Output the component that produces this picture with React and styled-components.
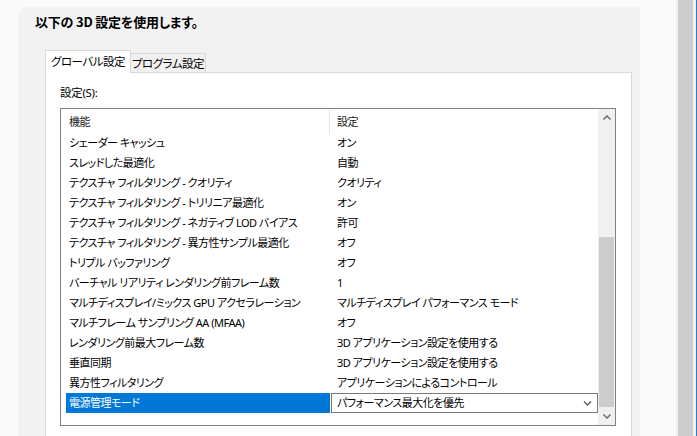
import React from 'react'
import styled, { createGlobalStyle } from 'styled-components'

const GlobalStyle = createGlobalStyle`
    html, body {
        margin: 0;
        padding: 0;
        background: #fafafa;
    }
    body {
        font-family: "Noto Sans", "Noto Sans CJK JP", sans-serif;
        font-feature-settings: "palt";
        color: #000;
        overflow: hidden;
    }
`

const rows = [
    ['シェーダー キャッシュ', 'オン'],
    ['スレッドした最適化', '自動'],
    ['テクスチャ フィルタリング - クオリティ', 'クオリティ'],
    ['テクスチャ フィルタリング - トリリニア最適化', 'オン'],
    ['テクスチャ フィルタリング - ネガティブ LOD バイアス', '許可'],
    ['テクスチャ フィルタリング - 異方性サンプル最適化', 'オフ'],
    ['トリプル バッファリング', 'オフ'],
    ['バーチャル リアリティ レンダリング前フレーム数', '1'],
    ['マルチディスプレイ/ミックス GPU アクセラレーション', 'マルチディスプレイ パフォーマンス モード'],
    ['マルチフレーム サンプリング AA (MFAA)', 'オフ'],
    ['レンダリング前最大フレーム数', '3D アプリケーション設定を使用する'],
    ['垂直同期', '3D アプリケーション設定を使用する'],
    ['異方性フィルタリング', 'アプリケーションによるコントロール'],
]

const Chevron = ({ up, color = '#606060', w = 8, h = 5 }) => (
    <svg width={w} height={h} viewBox="0 0 8 5">
        <polyline
            points={up ? '0.5,4.5 4,1 7.5,4.5' : '0.5,0.5 4,4 7.5,0.5'}
            fill="none"
            stroke={color}
            strokeWidth="1.3"
        />
    </svg>
)

const App = () => {
    return (
        <Window>
            <GlobalStyle />
            <Main>
                <Panel>
                    <Title>以下の 3D 設定を使用します。</Title>
                    <Tabs>
                        <Tab $active>グローバル設定</Tab>
                        <Tab>プログラム設定</Tab>
                    </Tabs>
                    <TabPane>
                        <FieldLabel>設定(S):</FieldLabel>
                        <ListBox>
                            <ListBody>
                                <HeaderRow>
                                    <HeaderCell $divider>機能</HeaderCell>
                                    <HeaderCell>設定</HeaderCell>
                                </HeaderRow>
                                {rows.map(([name, value]) => (
                                    <Row key={name}>
                                        <NameCell>{name}</NameCell>
                                        <ValueCell>{value}</ValueCell>
                                    </Row>
                                ))}
                                <Row>
                                    <NameCell $selected>電源管理モード</NameCell>
                                    <Combo>
                                        <span>パフォーマンス最大化を優先</span>
                                        <Chevron color="#555" w={9} h={5} />
                                    </Combo>
                                </Row>
                            </ListBody>
                            <ScrollBar>
                                <ScrollButton><Chevron up /></ScrollButton>
                                <Track>
                                    <Thumb />
                                </Track>
                                <ScrollButton><Chevron /></ScrollButton>
                            </ScrollBar>
                        </ListBox>
                    </TabPane>
                </Panel>
            </Main>
            <OuterScroll>
                <OuterThumb />
            </OuterScroll>
            <Edge />
        </Window>
    )
}

const Window = styled.div`
    display: flex;
    width: 697px;
    height: 436px;
    overflow: hidden;
`

const Main = styled.div`
    flex: 1;
    padding: 7px 0 0 18px;
    background: #fafafa;
`

const Panel = styled.div`
    width: 622px;
    height: 100%;
    background: #f2f2f2;
    border-top-left-radius: 10px;
    padding-top: 6px;
    box-sizing: border-box;
`

const Title = styled.div`
    margin-left: 17px;
    font-size: 13px;
    font-weight: 700;
    line-height: 18px;
    height: 18px;
    letter-spacing: -0.2px;
    font-family: "Noto Sans CJK JP", sans-serif;
`

const Tabs = styled.div`
    display: flex;
    align-items: flex-end;
    margin: 19px 0 -1px 27px;
    height: 23px;
    position: relative;
    z-index: 1;
`

const Tab = styled.div`
    box-sizing: border-box;
    font-size: 11.5px;
    letter-spacing: -0.5px;
    white-space: nowrap;
    line-height: 1;
    display: flex;
    align-items: center;
    justify-content: center;
    border: 1px solid #d9d9d9;
    height: ${p => (p.$active ? '23px' : '20px')};
    width: ${p => (p.$active ? '86px' : '75px')};
    background: ${p => (p.$active ? '#fff' : '#f0f0f0')};
    border-bottom: ${p => (p.$active ? 'none' : '1px solid #d9d9d9')};
    border-left: ${p => (p.$active ? '1px solid #d9d9d9' : 'none')};
    padding-top: ${p => (p.$active ? '0' : '1px')};
`

const TabPane = styled.div`
    margin-left: 27px;
    width: 587px;
    height: 400px;
    box-sizing: border-box;
    background: #fff;
    border: 1px solid #d9d9d9;
    padding: 12px 0 0 14px;
`

const FieldLabel = styled.div`
    font-size: 11.5px;
    letter-spacing: -0.3px;
    line-height: 16px;
    height: 16px;
`

const ListBox = styled.div`
    margin-top: 7px;
    width: 556px;
    height: 318px;
    box-sizing: border-box;
    border: 1px solid #828282;
    display: flex;
`

const ListBody = styled.div`
    flex: 1;
    display: flex;
    flex-direction: column;
    font-size: 11px;
    letter-spacing: -0.5px;
`

const HeaderRow = styled.div`
    display: grid;
    grid-template-columns: 269px 1fr;
    height: 24px;
    line-height: 24px;
    color: #1a1a1a;
`

const HeaderCell = styled.div`
    padding-left: ${p => (p.$divider ? '8px' : '7px')};
    border-right: ${p => (p.$divider ? '1px solid #e5e5e5' : 'none')};
    margin: 1px 0 0;
`

const Row = styled.div`
    display: grid;
    grid-template-columns: 269px 1fr;
    height: 20px;
    line-height: 20px;
    white-space: nowrap;
`

const NameCell = styled.div`
    margin-left: 5px;
    padding-left: 3px;
    background: ${p => (p.$selected ? '#0078d7' : 'transparent')};
    color: ${p => (p.$selected ? '#fff' : '#000')};
`

const ValueCell = styled.div`
    padding-left: 7px;
`

const Combo = styled.div`
    margin-left: 1px;
    box-sizing: border-box;
    height: 20px;
    border: 1px solid #7a7a7a;
    display: flex;
    align-items: center;
    justify-content: space-between;
    padding: 0 5px 0 5px;
    line-height: 18px;
`

const ScrollBar = styled.div`
    width: 17px;
    background: #f0f0f0;
    display: flex;
    flex-direction: column;
`

const ScrollButton = styled.div`
    height: 17px;
    display: flex;
    align-items: center;
    justify-content: center;
`

const Track = styled.div`
    flex: 1;
    display: flex;
    flex-direction: column;
    justify-content: flex-end;
    padding: 0 1px 1px;
`

const Thumb = styled.div`
    height: 170px;
    background: #cdcdcd;
`

const OuterScroll = styled.div`
    width: 20px;
    background: #f0f0f0;
    padding-left: 2px;
    box-sizing: border-box;
`

const OuterThumb = styled.div`
    width: 15px;
    height: 100%;
    background: #cdcdcd;
`

const Edge = styled.div`
    width: 1px;
    background: #1883d7;
`

export default App
